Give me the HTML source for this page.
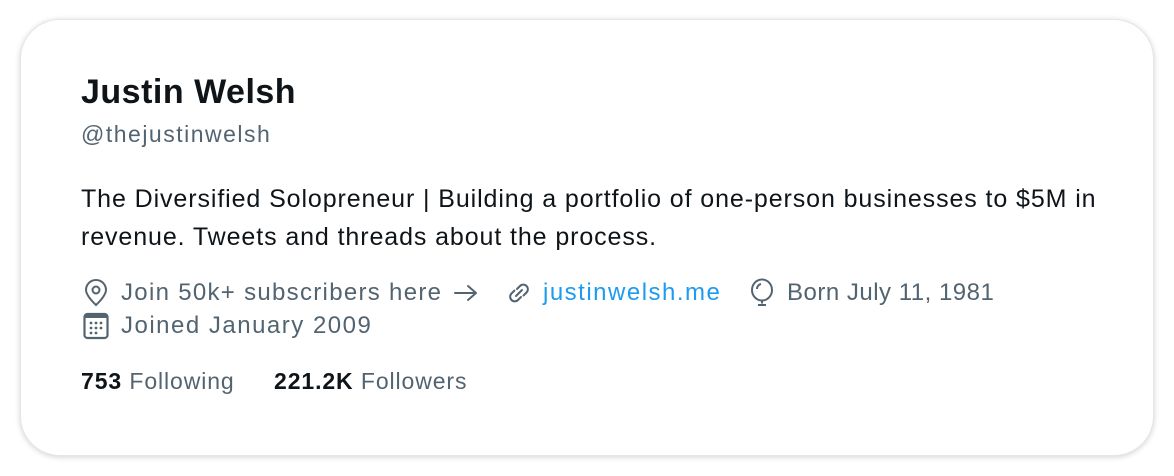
<!DOCTYPE html>
<html><head><style>
*{margin:0;padding:0;box-sizing:border-box}
body{width:1174px;height:476px;background:#fff;font-family:"Liberation Sans",sans-serif;position:relative;overflow:hidden}
.card{position:absolute;left:20px;top:19px;width:1134px;height:437px;border-radius:40px;background:#fff;box-shadow:0 1px 6px rgba(0,0,0,.18);border:1px solid #e6e6e6}
.t{position:absolute;white-space:nowrap}
.name{left:81px;top:73px;font-size:34px;font-weight:bold;color:#0f1419;letter-spacing:0.5px}
.handle{left:81px;top:121px;font-size:23px;color:#536471;letter-spacing:1.5px}
.bio{left:81px;top:180px;font-size:25px;line-height:38px;color:#0f1419;letter-spacing:0.9px}
.meta{font-size:24px;color:#536471}
svg{position:absolute}
.st{top:368px;font-size:23px;color:#536471;letter-spacing:0.9px}
.st b{color:#0f1419}
</style></head><body>
<div class="card"></div>
<div class="t name">Justin Welsh</div>
<div class="t handle">@thejustinwelsh</div>
<div class="t bio">The Diversified Solopreneur | Building a portfolio of one-person businesses to $5M in<br>revenue. Tweets and threads about the process.</div>
<svg style="left:83px;top:279px" width="26" height="28" viewBox="0 0 26 28" fill="none" stroke="#536471" stroke-width="2"><path d="M13 26C13 26 3 17 3 11a10 10 0 0 1 20 0c0 6-10 15-10 15z"/><circle cx="13" cy="11" r="3.5"/></svg>
<div class="t meta" style="left:121px;top:279px;letter-spacing:1.3px">Join 50k+ subscribers here</div>
<svg style="left:453px;top:283px" width="26" height="20" viewBox="0 0 26 20" fill="none" stroke="#536471" stroke-width="2" stroke-linecap="round" stroke-linejoin="round"><path d="M2 10h21M15 3l8 7-8 7"/></svg>
<svg style="left:505px;top:279px" width="28" height="28" viewBox="0 0 28 28" fill="none" stroke="#536471" stroke-width="2" stroke-linecap="round"><path d="M12 10l3-3a4.5 4.5 0 0 1 6.5 6.5l-3 3"/><path d="M16 18l-3 3a4.5 4.5 0 0 1-6.5-6.5l3-3"/><path d="M11 17l6-6"/></svg>
<div class="t meta" style="left:543px;top:279px;color:#1d9bf0;letter-spacing:1.5px">justinwelsh.me</div>
<svg style="left:748px;top:278px" width="28" height="30" viewBox="0 0 28 30" fill="none" stroke="#536471" stroke-width="2"><ellipse cx="14" cy="12" rx="10" ry="10.5"/><path d="M14 22.5v3M10 27h8" /><path d="M9 11a5 5 0 0 1 4-5"/></svg>
<div class="t meta" style="left:787px;top:279px;letter-spacing:0.5px">Born July 11, 1981</div>
<svg style="left:83px;top:312px" width="26" height="28" viewBox="0 0 26 28"><rect x="1.5" y="2" width="23" height="24" rx="3" fill="none" stroke="#536471" stroke-width="2.2"/><rect x="1.5" y="2" width="23" height="4" fill="#536471"/><g fill="#536471"><circle cx="8" cy="11" r="1.4"/><circle cx="13" cy="11" r="1.4"/><circle cx="18" cy="11" r="1.4"/><circle cx="8" cy="16" r="1.4"/><circle cx="13" cy="16" r="1.4"/><circle cx="18" cy="16" r="1.4"/><circle cx="8" cy="21" r="1.4"/><circle cx="13" cy="21" r="1.4"/></g></svg>
<div class="t meta" style="left:121px;top:312px;letter-spacing:1.5px">Joined January 2009</div>
<div class="t st" style="left:81px"><b>753</b> Following</div>
<div class="t st" style="left:274px"><b>221.2K</b> Followers</div>
</body></html>
